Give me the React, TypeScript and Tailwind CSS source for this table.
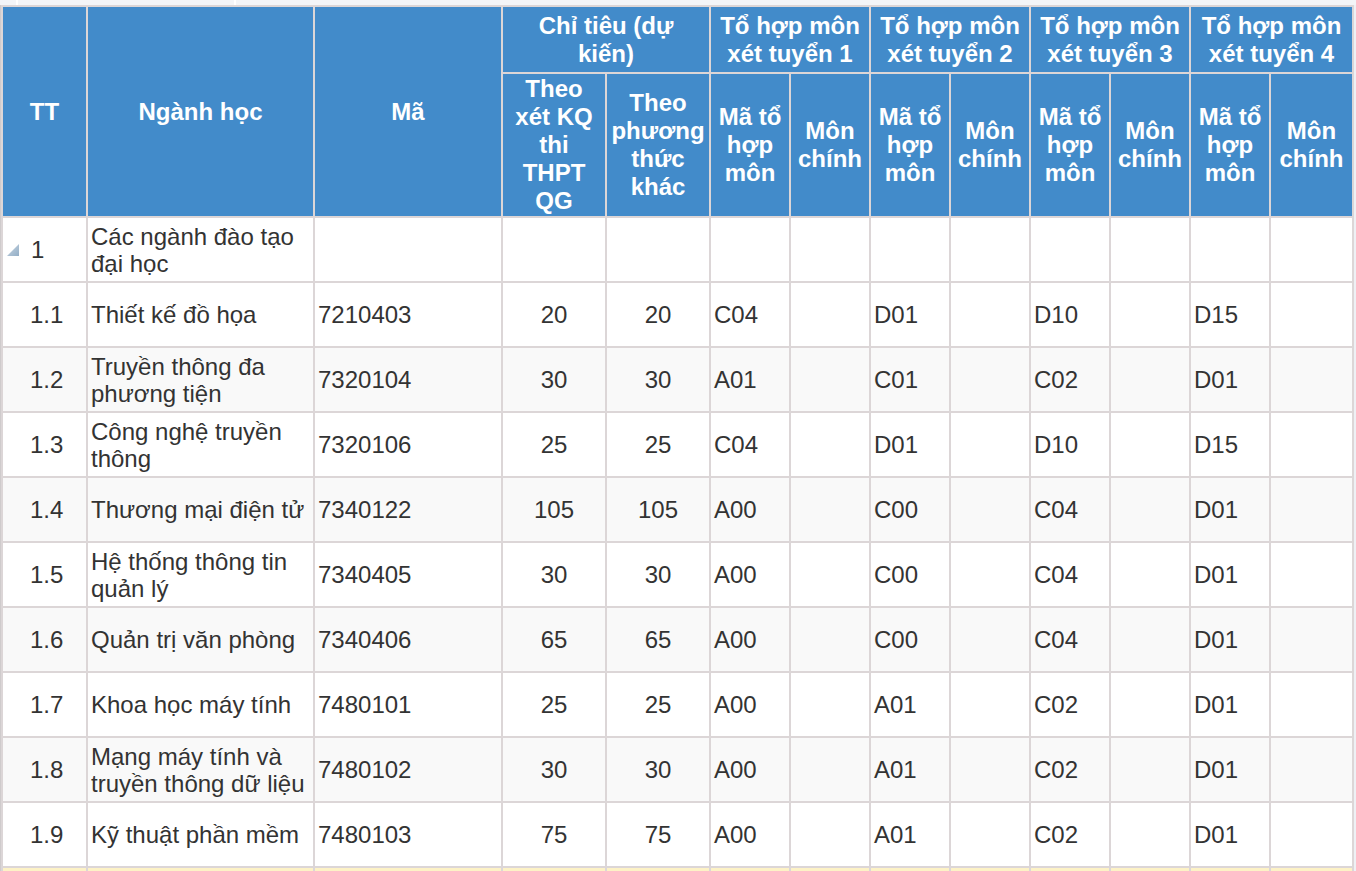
import React from "react";

type Row = {
  tt: string;
  name: string;
  code: string;
  a: string;
  b: string;
  c1: string;
  c2: string;
  c3: string;
  c4: string;
};

const rows: Row[] = [
  { tt: "1.1", name: "Thiết kế đồ họa", code: "7210403", a: "20", b: "20", c1: "C04", c2: "D01", c3: "D10", c4: "D15" },
  { tt: "1.2", name: "Truyền thông đa phương tiện", code: "7320104", a: "30", b: "30", c1: "A01", c2: "C01", c3: "C02", c4: "D01" },
  { tt: "1.3", name: "Công nghệ truyền thông", code: "7320106", a: "25", b: "25", c1: "C04", c2: "D01", c3: "D10", c4: "D15" },
  { tt: "1.4", name: "Thương mại điện tử", code: "7340122", a: "105", b: "105", c1: "A00", c2: "C00", c3: "C04", c4: "D01" },
  { tt: "1.5", name: "Hệ thống thông tin quản lý", code: "7340405", a: "30", b: "30", c1: "A00", c2: "C00", c3: "C04", c4: "D01" },
  { tt: "1.6", name: "Quản trị văn phòng", code: "7340406", a: "65", b: "65", c1: "A00", c2: "C00", c3: "C04", c4: "D01" },
  { tt: "1.7", name: "Khoa học máy tính", code: "7480101", a: "25", b: "25", c1: "A00", c2: "A01", c3: "C02", c4: "D01" },
  { tt: "1.8", name: "Mạng máy tính và truyền thông dữ liệu", code: "7480102", a: "30", b: "30", c1: "A00", c2: "A01", c3: "C02", c4: "D01" },
  { tt: "1.9", name: "Kỹ thuật phần mềm", code: "7480103", a: "75", b: "75", c1: "A00", c2: "A01", c3: "C02", c4: "D01" },
];

const th = "border-2 border-[#dcd6d7] bg-[#428bca] text-white font-bold text-center align-middle px-[3px] leading-[28px]";
const td = "border-2 border-[#dcd6d7] px-[3px] align-middle h-[65px]";

function Triangle() {
  return (
    <svg width="14" height="14" viewBox="0 0 14 14" className="inline-block">
      <defs>
        <linearGradient id="tg" x1="0" y1="0" x2="1" y2="1">
          <stop offset="0" stopColor="#c9d6e2" />
          <stop offset="1" stopColor="#93aec6" />
        </linearGradient>
      </defs>
      <polygon points="13,1 13,13 1,13" fill="url(#tg)" />
    </svg>
  );
}

export default function App() {
  return (
    <div
      className="w-[1356px] min-h-[871px] bg-[#eef1f5] text-[#333] text-[24px] leading-[27px]"
      style={{ fontFamily: '"Liberation Sans", Arial, sans-serif' }}
    >
      <div className="flex h-[5px] bg-[#f3f5f8]">
        <div className="w-[18px] border-r-2 border-[#ffffff]" />
        <div className="w-[218px] border-r-2 border-[#ffffff]" />
      </div>
      <div className="w-[1352px] border-l border-[#cfcbcc] bg-white">
        <table className="table-fixed border-collapse w-[1351px]">
          <colgroup>
            <col className="w-[85px]" />
            <col className="w-[227px]" />
            <col className="w-[188px]" />
            <col className="w-[104px]" />
            <col className="w-[104px]" />
            <col className="w-[80px]" />
            <col className="w-[80px]" />
            <col className="w-[80px]" />
            <col className="w-[80px]" />
            <col className="w-[80px]" />
            <col className="w-[80px]" />
            <col className="w-[80px]" />
            <col className="w-[83px]" />
          </colgroup>
          <thead>
            <tr className="h-[67px]">
              <th rowSpan={2} className={th}>TT</th>
              <th rowSpan={2} className={th}>Ngành học</th>
              <th rowSpan={2} className={th}>Mã</th>
              <th colSpan={2} className={th}>
                Chỉ tiêu (dự
                <br />
                kiến)
              </th>
              <th colSpan={2} className={th}>Tổ hợp môn xét tuyển 1</th>
              <th colSpan={2} className={th}>Tổ hợp môn xét tuyển 2</th>
              <th colSpan={2} className={th}>Tổ hợp môn xét tuyển 3</th>
              <th colSpan={2} className={th}>Tổ hợp môn xét tuyển 4</th>
            </tr>
            <tr className="h-[144px]">
              <th className={th}>Theo xét KQ thi THPT QG</th>
              <th className={th}>Theo phương thức khác</th>
              <th className={th}>Mã tổ hợp môn</th>
              <th className={th}>Môn chính</th>
              <th className={th}>Mã tổ hợp môn</th>
              <th className={th}>Môn chính</th>
              <th className={th}>Mã tổ hợp môn</th>
              <th className={th}>Môn chính</th>
              <th className={th}>Mã tổ hợp môn</th>
              <th className={th}>Môn chính</th>
            </tr>
          </thead>
          <tbody>
            <tr className="bg-white">
              <td className={td}>
                <div className="flex items-center">
                  <span className="w-[25px] flex items-center">
                    <Triangle />
                  </span>
                  <span>1</span>
                </div>
              </td>
              <td className={td}>Các ngành đào tạo đại học</td>
              <td className={td}></td>
              <td className={td}></td>
              <td className={td}></td>
              <td className={td}></td>
              <td className={td}></td>
              <td className={td}></td>
              <td className={td}></td>
              <td className={td}></td>
              <td className={td}></td>
              <td className={td}></td>
              <td className={td}></td>
            </tr>
            {rows.map((r, i) => (
              <tr key={r.tt} className={i % 2 === 1 ? "bg-[#f9f9f9]" : "bg-white"}>
                <td className={td + " pl-[27px]"}>{r.tt}</td>
                <td className={td}>{r.name}</td>
                <td className={td}>{r.code}</td>
                <td className={td + " text-center"}>{r.a}</td>
                <td className={td + " text-center"}>{r.b}</td>
                <td className={td}>{r.c1}</td>
                <td className={td}></td>
                <td className={td}>{r.c2}</td>
                <td className={td}></td>
                <td className={td}>{r.c3}</td>
                <td className={td}></td>
                <td className={td}>{r.c4}</td>
                <td className={td}></td>
              </tr>
            ))}
            <tr className="bg-[#fdf2c6]">
              {Array.from({ length: 13 }).map((_, i) => (
                <td key={i} className={td}></td>
              ))}
            </tr>
          </tbody>
        </table>
      </div>
    </div>
  );
}
